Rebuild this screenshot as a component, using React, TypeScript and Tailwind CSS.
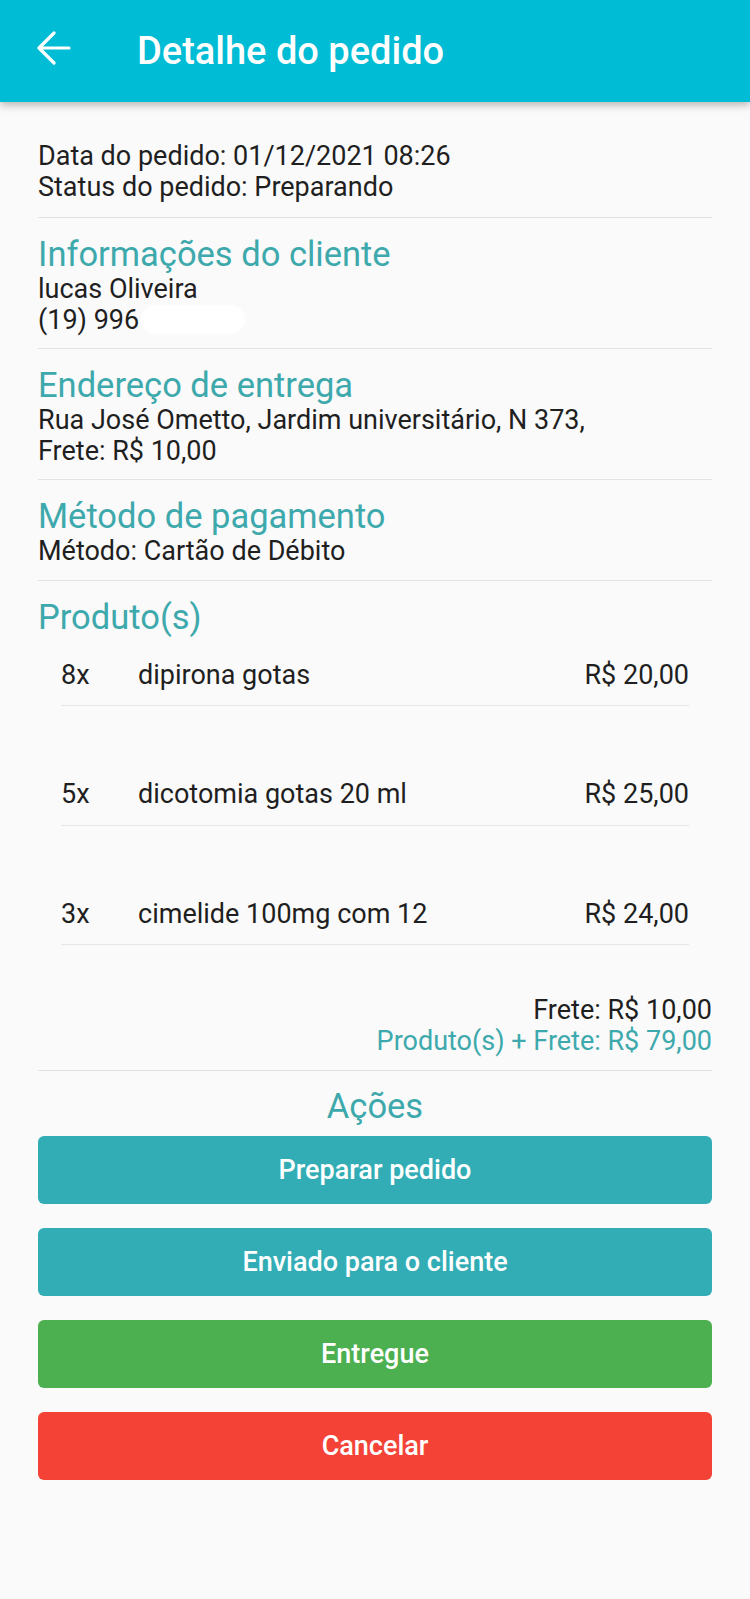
import React from "react";

type Product = { qty: string; name: string; price: string };

const products: Product[] = [
  { qty: "8x", name: "dipirona gotas", price: "R$ 20,00" },
  { qty: "5x", name: "dicotomia gotas 20 ml", price: "R$ 25,00" },
  { qty: "3x", name: "cimelide 100mg com 12", price: "R$ 24,00" },
];

const BackArrow = () => (
  <svg width="36" height="34" viewBox="0 0 36 34" fill="none">
    <path
      d="M3 17H33M18 2L3 17L18 32"
      stroke="white"
      strokeWidth="3.2"
      strokeLinecap="round"
      strokeLinejoin="round"
    />
  </svg>
);

const Section: React.FC<{ title: string; children: React.ReactNode }> = ({ title, children }) => (
  <section className="border-b border-[#e3e3e3] pt-[16px] pb-[13px]">
    <h2 className="text-[34.5px] leading-[40px] text-[#3da9ac]">{title}</h2>
    <div className="text-[27px] leading-[30.5px] text-[#1f1f1f]">{children}</div>
  </section>
);

const ActionButton: React.FC<{ label: string; className: string }> = ({ label, className }) => (
  <button
    className={
      "flex h-[68px] w-full items-center justify-center rounded-[6px] text-[27px] font-medium text-white " +
      className
    }
  >
    {label}
  </button>
);

export default function App() {
  return (
    <div className="min-h-screen bg-[#fafafa] font-['Roboto',sans-serif]">
      <header className="relative z-10 flex h-[102px] items-center bg-[#00bcd4] shadow-[0_3px_8px_rgba(0,0,0,0.28)]">
        <button className="mb-[6px] ml-[36px] flex items-center">
          <BackArrow />
        </button>
        <h1 className="ml-[65px] text-[38px] font-medium leading-[42px] text-white">Detalhe do pedido</h1>
      </header>

      <main className="px-[38px] pt-[39px] pb-[80px]">
        <div className="border-b border-[#e3e3e3] pb-[14px] text-[27px] leading-[31px] text-[#1f1f1f]">
          <p>Data do pedido: 01/12/2021 08:26</p>
          <p>Status do pedido: Preparando</p>
        </div>

        <Section title="Informações do cliente">
          <p>lucas Oliveira</p>
          <p className="flex items-center">
            (19) 996
            <span className="ml-[2px] inline-block h-[29px] w-[104px] rounded-full bg-white blur-[1px]" />
          </p>
        </Section>

        <Section title="Endereço de entrega">
          <p>Rua José Ometto, Jardim universitário, N 373,</p>
          <p>Frete: R$ 10,00</p>
        </Section>

        <Section title="Método de pagamento">
          <p>Método: Cartão de Débito</p>
        </Section>

        <section className="border-b border-[#e3e3e3] pt-[16px] pb-[14px]">
          <h2 className="text-[34.5px] leading-[40px] text-[#3da9ac]">Produto(s)</h2>
          <div className="mx-[23px]">
            {products.map((p) => (
              <div
                key={p.name}
                className="mb-[50px] flex border-b border-[#e6e6e6] pt-[23px] pb-[15px] text-[27px] leading-[30.5px] text-[#1f1f1f]"
              >
                <span className="w-[77px]">{p.qty}</span>
                <span className="flex-1">{p.name}</span>
                <span>{p.price}</span>
              </div>
            ))}
          </div>
          <div className="text-right text-[27px] leading-[30.5px]">
            <p className="text-[#1f1f1f]">Frete: R$ 10,00</p>
            <p className="text-[#3da9ac]">Produto(s) + Frete: R$ 79,00</p>
          </div>
        </section>

        <section className="pt-[15px]">
          <h2 className="text-center text-[34.5px] leading-[40px] text-[#3da9ac]">Ações</h2>
          <div className="mt-[10px] flex flex-col gap-[24px]">
            <ActionButton label="Preparar pedido" className="bg-[#33adb5]" />
            <ActionButton label="Enviado para o cliente" className="bg-[#33adb5]" />
            <ActionButton label="Entregue" className="bg-[#4caf50]" />
            <ActionButton label="Cancelar" className="bg-[#f44336]" />
          </div>
        </section>
      </main>
    </div>
  );
}
